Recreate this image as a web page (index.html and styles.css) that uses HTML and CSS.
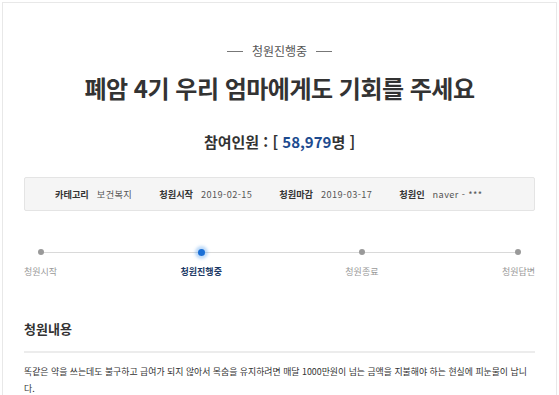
FILE: index.html
```html
<!DOCTYPE html>
<html lang="ko">
<head>
    <meta charset="UTF-8">
    <meta name="viewport" content="width=device-width, initial-scale=1.0">
    <title>청원진행중</title>
    <link rel="stylesheet" href="styles.css">
</head>
<body>
    <div class="petition">
        <p class="petition-status">청원진행중</p>
        <h1 class="petition-title">폐암 4기 우리 엄마에게도 기회를 주세요</h1>
        <p class="petition-count">참여인원 : [ <span class="count-num">58,979</span>명 ]</p>

        <ul class="petition-info">
            <li><strong>카테고리</strong><span>보건복지</span></li>
            <li><strong>청원시작</strong><span>2019-02-15</span></li>
            <li><strong>청원마감</strong><span>2019-03-17</span></li>
            <li><strong>청원인</strong><span>naver - ***</span></li>
        </ul>

        <ol class="steps">
            <li class="step"><i class="dot"></i><span>청원시작</span></li>
            <li class="step active"><i class="dot"></i><span>청원진행중</span></li>
            <li class="step"><i class="dot"></i><span>청원종료</span></li>
            <li class="step"><i class="dot"></i><span>청원답변</span></li>
        </ol>

        <h2 class="content-title">청원내용</h2>
        <div class="content-body">
            똑같은 약을 쓰는데도 불구하고 급여가 되지 않아서 목숨을 유지하려면 매달 1000만원이 넘는 금액을 지불해야 하는 현실에 피눈물이 납니다.
        </div>
    </div>
</body>
</html>
```

FILE: styles.css
```css
body {
    margin: 0;
    font-family: 'Noto Sans CJK KR', 'Noto Sans', sans-serif;
    background: #fff;
    color: #333;
    overflow: hidden;
}

.petition {
    margin: 2px 2px 0 2px;
    border: 1px solid #e8e8e8;
    border-bottom: none;
    padding: 40px 21px 0 21px;
    min-height: 400px;
}

.petition-status {
    margin: 0;
    font-size: 12px;
    line-height: 16px;
    color: #555;
    text-align: center;
    display: flex;
    justify-content: center;
    align-items: center;
    gap: 9px;
}

.petition-status::before,
.petition-status::after {
    content: '';
    width: 16px;
    height: 1px;
    background: #777;
}

.petition-title {
    margin: 14px 0 0;
    font-size: 24px;
    line-height: 30px;
    font-weight: bold;
    text-align: center;
    color: #333;
    letter-spacing: -0.5px;
}

.petition-count {
    margin: 28px 0 0;
    font-size: 15px;
    line-height: 22px;
    font-weight: bold;
    text-align: center;
    color: #333;
}

.count-num {
    color: #1d4b8f;
}

.petition-info {
    list-style: none;
    margin: 24px 0 0;
    padding: 0 0 0 30px;
    height: 32px;
    background: #f5f5f5;
    border: 1px solid #e4e4e4;
    border-radius: 2px;
    display: flex;
    align-items: center;
    gap: 27px;
    font-size: 9.2px;
}

.petition-info li {
    display: flex;
    gap: 8px;
}

.petition-info strong {
    color: #333;
}

.petition-info span {
    color: #555;
    letter-spacing: 0.4px;
}

.steps {
    list-style: none;
    margin: 38px 0 0;
    padding: 0;
    display: flex;
    justify-content: space-between;
    position: relative;
}

.steps::before {
    content: '';
    position: absolute;
    left: 17px;
    right: 17px;
    top: 3px;
    height: 1px;
    background: #d9d9d9;
}

.step {
    display: flex;
    flex-direction: column;
    align-items: center;
    gap: 10px;
    font-size: 9px;
    line-height: 14px;
    color: #999;
    position: relative;
}

.dot {
    width: 6px;
    height: 6px;
    border-radius: 50%;
    background: #999;
}

.step.active {
    color: #1c3a66;
    font-weight: bold;
}

.step.active .dot {
    width: 7px;
    height: 7px;
    margin-top: -0.5px;
    margin-bottom: -0.5px;
    background: #1a6fd6;
    box-shadow: 0 0 3px 3px rgba(70, 150, 235, 0.35);
}

.content-title {
    margin: 41px 0 0;
    padding-bottom: 13px;
    border-bottom: 2px solid #ececec;
    font-size: 13px;
    line-height: 18px;
    font-weight: bold;
    color: #333;
}

.content-body {
    margin-top: 10px;
    padding-right: 6px;
    font-size: 8.9px;
    line-height: 17px;
    color: #333;
}
```
